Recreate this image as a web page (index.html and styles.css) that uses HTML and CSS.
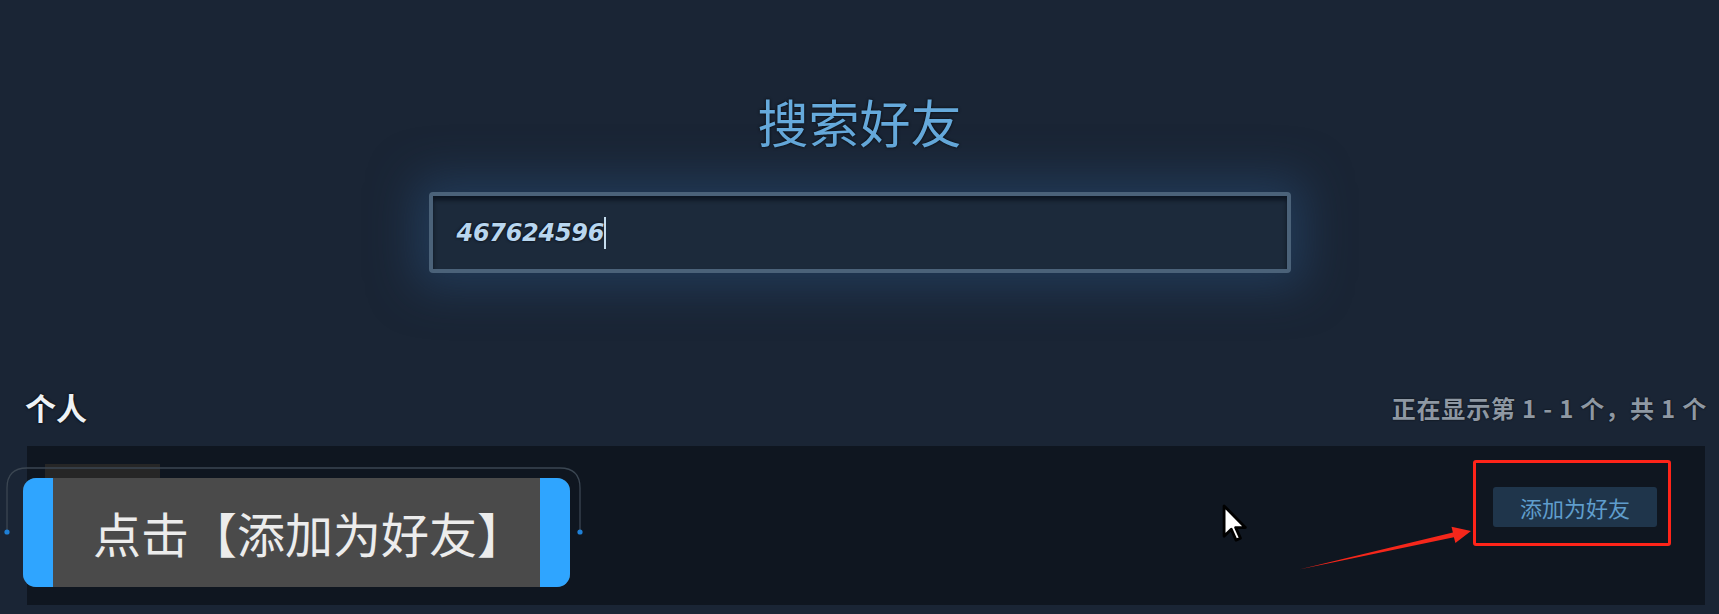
FILE: index.html
```html
<!DOCTYPE html>
<html lang="zh-CN">
<head>
    <meta charset="UTF-8">
    <meta name="viewport" content="width=device-width, initial-scale=1.0">
    <title>搜索好友</title>
    <link rel="stylesheet" href="styles.css">
</head>
<body>
    <main class="page">
        <section class="search">
            <h1 class="search-title">搜索好友</h1>
            <div class="search-box">
                <span class="search-value">467624596</span><span class="caret"></span>
            </div>
        </section>

        <section class="results">
            <div class="results-head">
                <h2 class="results-label">个人</h2>
                <span class="results-count">正在显示第 1 - 1 个，共 1 个</span>
            </div>
            <div class="result-row">
                <div class="avatar"></div>
                <button class="add-btn">添加为好友</button>
            </div>
        </section>
    </main>

    <!-- video annotations laid over the page -->
    <svg class="caption-bracket" width="590" height="80" viewBox="0 0 590 80">
        <path d="M7 68 V24 Q7 4 27 4 H560 Q580 4 580 24 V68" fill="none" stroke="#3b4652" stroke-width="1.3"/>
        <circle cx="7" cy="68" r="2.6" fill="#1f80d6"/>
        <circle cx="580" cy="68" r="2.6" fill="#1f80d6"/>
    </svg>
    <div class="caption">
        <span class="caption-bar"></span>
        <span class="caption-text">点击【添加为好友】</span>
        <span class="caption-bar"></span>
    </div>

    <div class="highlight-box"></div>
    <svg class="pointer-arrow" width="200" height="60" viewBox="1290 520 200 60">
        <polygon points="1299,569.5 1453.9,537.3 1455.4,543 1471,531 1451.5,526.8 1452.9,532.5" fill="#f5271b"/>
    </svg>
    <svg class="cursor" width="26" height="38" viewBox="0 0 13.5 20">
        <path d="M1 1 V17 L4.8 13.3 L7.3 19 L9.6 18 L7.1 12.4 H12.2 Z" fill="#ffffff" stroke="#000000" stroke-width="1.5" stroke-linejoin="round"/>
    </svg>
</body>
</html>
```

FILE: styles.css
```css
body {
    margin: 0;
    height: 614px;
    overflow: hidden;
    position: relative;
    background-color: #1a2535;
    font-family: "Noto Sans CJK SC", "Noto Sans", sans-serif;
    color: #e6ebf0;
}

.page {
    padding-top: 91px;
}

.search {
    display: flex;
    flex-direction: column;
    align-items: center;
}

.search-title {
    margin: 0;
    font-size: 51px;
    line-height: 60px;
    font-weight: normal;
    color: #66aadc;
    text-shadow: 0 0 3px rgba(0, 0, 0, 0.9);
}

.search-box {
    box-sizing: border-box;
    width: 862px;
    height: 81px;
    margin-top: 41px;
    padding-left: 24px;
    display: flex;
    align-items: center;
    background: #1c2a3b;
    border: 4px solid #4b6279;
    border-radius: 4px;
    box-shadow: 0 0 45px 14px rgba(38, 72, 110, 0.6), inset 0 4px 4px rgba(5, 12, 22, 0.7);
}

.search-value {
    font-family: "DejaVu Sans", sans-serif;
    font-size: 24px;
    font-weight: bold;
    font-style: italic;
    letter-spacing: -0.3px;
    color: #b8d6ef;
    text-shadow: 0 0 3px rgba(0, 0, 0, 0.95);
}

.caret {
    width: 2px;
    height: 32px;
    margin-left: 0;
    background: #c4dcee;
}

.results {
    margin-top: 116px;
    padding: 0 14px 0 27px;
}

.results-head {
    display: flex;
    justify-content: space-between;
    align-items: center;
    margin: 0 -2px;
    height: 36px;
}

.results-label {
    margin: 0;
    font-size: 31px;
    line-height: 36px;
    font-weight: bold;
    color: #eef2f6;
    text-shadow: 0 0 3px #000;
}

.results-count {
    font-size: 24px;
    font-weight: bold;
    letter-spacing: 0.8px;
    color: #8e98a3;
    text-shadow: 0 0 2px rgba(0, 0, 0, 0.8);
}

.result-row {
    height: 159px;
    margin-top: 21px;
    padding: 18px 48px 0 18px;
    box-sizing: border-box;
    display: flex;
    justify-content: space-between;
    align-items: flex-start;
    background: #0f1620;
}

.avatar {
    width: 115px;
    height: 96px;
    background: #262626;
}

.add-btn {
    margin-top: 23px;
    width: 164px;
    height: 40px;
    border: none;
    border-radius: 3px;
    background: #1f354b;
    color: #5f9dcc;
    font-family: "Noto Sans CJK SC", sans-serif;
    font-size: 22px;
    padding: 0;
    cursor: pointer;
}

.caption-bracket {
    position: absolute;
    left: 0;
    top: 464px;
}

.caption {
    position: absolute;
    left: 23px;
    top: 478px;
    width: 547px;
    height: 109px;
    display: flex;
    border-radius: 13px;
    overflow: hidden;
    background: #4a4a4a;
}

.caption-bar {
    width: 30px;
    background: #2fa5ff;
}

.caption-text {
    flex: 1;
    padding-left: 40px;
    font-size: 48px;
    line-height: 109px;
    color: #ececec;
    white-space: nowrap;
}

.highlight-box {
    position: absolute;
    left: 1473px;
    top: 460px;
    width: 198px;
    height: 86px;
    box-sizing: border-box;
    border: 3px solid #ff2419;
    border-radius: 3px;
}

.pointer-arrow {
    position: absolute;
    left: 1290px;
    top: 520px;
}

.cursor {
    position: absolute;
    left: 1222px;
    top: 504px;
}
```
